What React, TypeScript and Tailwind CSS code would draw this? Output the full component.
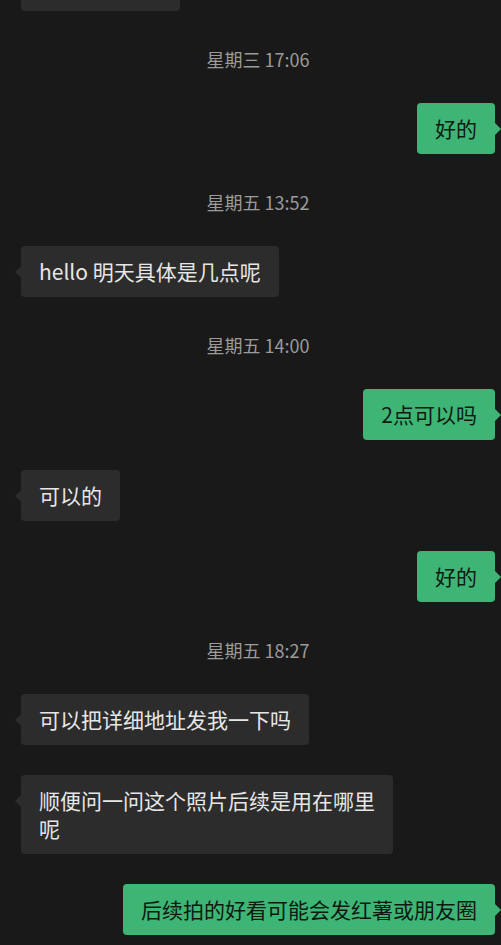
import React from "react";

type Msg =
  | { kind: "ts"; text: string }
  | { kind: "in"; text: string; first?: boolean }
  | { kind: "out"; text: string };

const msgs: Msg[] = [
  { kind: "in", text: "\u00a0", first: true },
  { kind: "ts", text: "星期三 17:06" },
  { kind: "out", text: "好的" },
  { kind: "ts", text: "星期五 13:52" },
  { kind: "in", text: "hello 明天具体是几点呢" },
  { kind: "ts", text: "星期五 14:00" },
  { kind: "out", text: "2点可以吗" },
  { kind: "in", text: "可以的" },
  { kind: "out", text: "好的" },
  { kind: "ts", text: "星期五 18:27" },
  { kind: "in", text: "可以把详细地址发我一下吗" },
  { kind: "in", text: "顺便问一问这个照片后续是用在哪里呢" },
  { kind: "out", text: "后续拍的好看可能会发红薯或朋友圈" },
];

const font = {
  fontFamily: '"Noto Sans CJK SC", "Noto Sans", sans-serif',
};

export default function App() {
  return (
    <div
      className="w-[501px] h-[945px] overflow-hidden bg-[#191919] pl-[21px] pr-[6px]"
      style={font}
    >
      <div className="flex flex-col">
        {msgs.map((m, i) => {
          const prev = msgs[i - 1];
          if (m.kind === "ts") {
            return (
              <div
                key={i}
                className="mt-[36px] mb-[32px] flex h-[24px] items-center justify-center text-[18px] leading-[24px] text-[#9b9b9b]"
              >
                {m.text}
              </div>
            );
          }
          const mt =
            i === 0 ? "-mt-[40px]" : prev && prev.kind !== "ts" ? "mt-[30px]" : "mt-0";
          if (m.kind === "in") {
            return (
              <div key={i} className={`flex justify-start ${mt}`}>
                <div
                  className={`relative rounded-[4px] bg-[#2c2c2c] px-[18px] pt-[11px] pb-[12px] text-[21px] leading-[28px] text-[#e6e6e6] max-w-[372px] ${
                    m.first ? "w-[159px]" : ""
                  }`}
                >
                  <span className="absolute left-[-6px] top-[20px] h-0 w-0 border-y-[6px] border-r-[6px] border-y-transparent border-r-[#2c2c2c]" />
                  {m.text}
                </div>
              </div>
            );
          }
          return (
            <div key={i} className={`flex justify-end ${mt}`}>
              <div className="relative rounded-[4px] bg-[#3eb575] px-[18px] pt-[11px] pb-[12px] text-[21px] leading-[28px] text-[#0d1a12] max-w-[372px]">
                <span className="absolute right-[-6px] top-[20px] h-0 w-0 border-y-[6px] border-l-[6px] border-y-transparent border-l-[#3eb575]" />
                {m.text}
              </div>
            </div>
          );
        })}
      </div>
    </div>
  );
}
